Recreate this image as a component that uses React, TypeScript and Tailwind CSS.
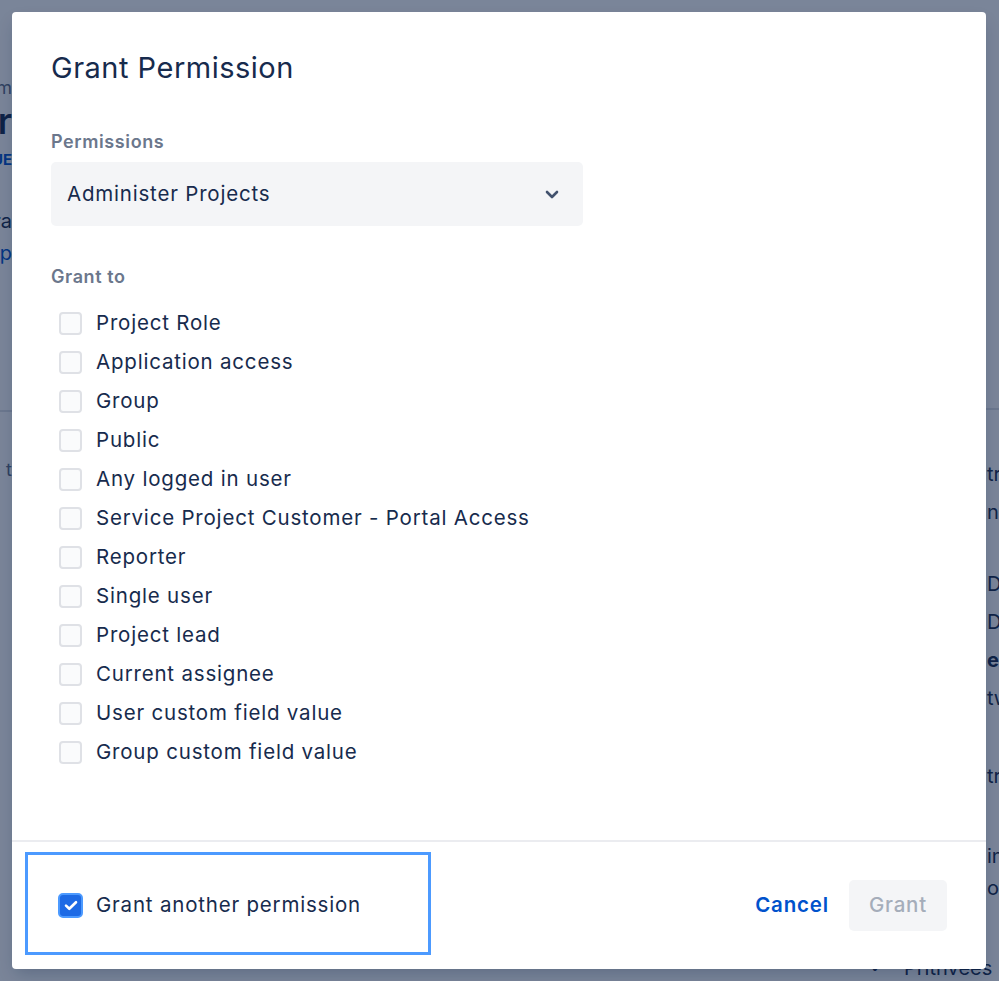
const grantOptions = [
  "Project Role",
  "Application access",
  "Group",
  "Public",
  "Any logged in user",
  "Service Project Customer - Portal Access",
  "Reporter",
  "Single user",
  "Project lead",
  "Current assignee",
  "User custom field value",
  "Group custom field value",
];

function Checkbox({ checked = false }: { checked?: boolean }) {
  if (checked) {
    return (
      <span className="flex h-[25px] w-[25px] items-center justify-center rounded-[5px] border-2 border-[#4c9aff] bg-[#1d6ae5]">
        <svg width="14" height="11" viewBox="0 0 14 11" fill="none">
          <path d="M2 5.6l3.3 3.2L12 2.2" stroke="white" strokeWidth="2.6" strokeLinecap="round" strokeLinejoin="round" />
        </svg>
      </span>
    );
  }
  return <span className="block h-[23px] w-[23px] rounded-[4px] border-2 border-[#dfe1e6] bg-[#fafbfc]" />;
}

function Backdrop() {
  return (
    <div className="flex min-h-[981px] w-[999px] justify-between bg-white text-[20px] leading-[28px] text-[#172b4d]">
      <div className="flex w-[12px] flex-col items-end pt-[77px] whitespace-nowrap">
        <div className="h-[22px] text-[18px] leading-[22px] text-[#5e6c84]">m</div>
        <div className="h-[44px] text-[36px] font-semibold leading-[44px]">r</div>
        <div className="mt-[7px] h-[20px] text-[15px] font-bold leading-[20px] text-[#0052cc]">UE</div>
        <div className="mt-[37px] h-[28px]">ra</div>
        <div className="mt-[4px] h-[28px] text-[#0052cc]">p</div>
        <div className="mt-[143px] h-[2px] w-[40px] self-start bg-[#dfe1e6]" />
        <div className="mt-[44px] h-[28px] text-[18px] text-[#5e6c84]">t</div>
      </div>
      <div className="flex w-[130px] flex-col pt-[408px] whitespace-nowrap">
        <div className="mb-[50px] h-[2px] bg-[#dfe1e6]" />
        <div className="ml-[118px] h-[38px]">tr</div>
        <div className="ml-[118px] h-[72px]">n-</div>
        <div className="ml-[118px] h-[38px]">D</div>
        <div className="ml-[118px] h-[38px]">D</div>
        <div className="ml-[118px] h-[38px] font-bold">e</div>
        <div className="ml-[118px] h-[78px]">tw</div>
        <div className="ml-[118px] h-[80px]">tr</div>
        <div className="ml-[118px] h-[32px]">in</div>
        <div className="ml-[118px] h-[80px]">o</div>
        <div className="flex h-[28px] items-center">
          <span className="w-[35px] pl-[2px] text-[14px]">•</span>
          <span>Prithvees</span>
        </div>
      </div>
    </div>
  );
}

export default function App() {
  return (
    <div className="relative h-[981px] w-[999px] overflow-hidden font-['Inter','Liberation_Sans',sans-serif]">
      <Backdrop />
      <div className="absolute inset-0 bg-[rgba(9,30,66,0.54)]" />
      <div className="absolute left-[12px] top-[12px] flex h-[957px] w-[974px] flex-col rounded-[4px] bg-white text-[#172b4d] shadow-[0_8px_16px_-4px_rgba(9,30,66,0.25)]">
        <div className="flex-1 px-[39px] pt-[38px]">
          <h1 className="h-[36px] text-[29px] leading-[36px] font-normal tracking-[0.5px]">Grant Permission</h1>
          <div className="mt-[46px] h-[20px] text-[18px] leading-[20px] font-semibold tracking-[0.6px] text-[#6b778c]">Permissions</div>
          <button className="mt-[10px] flex h-[64px] w-[532px] items-center justify-between rounded-[5px] bg-[#f4f5f7] pl-[16px] pr-[24px] text-left text-[20.5px] tracking-[0.8px]">
            <span>Administer Projects</span>
            <svg width="14" height="9" viewBox="0 0 14 9" fill="none">
              <path d="M2 2l5 5 5-5" stroke="#42526e" strokeWidth="2.6" strokeLinecap="round" strokeLinejoin="round" />
            </svg>
          </button>
          <div className="mt-[41px] h-[20px] text-[18px] leading-[20px] font-semibold tracking-[0.6px] text-[#6b778c]">Grant to</div>
          <ul className="mt-[17px]">
            {grantOptions.map((o) => (
              <li key={o} className="flex h-[39px] items-center text-[20.5px] tracking-[0.8px]">
                <span className="flex w-[45px] justify-end pr-[14px]">
                  <Checkbox />
                </span>
                <span>{o}</span>
              </li>
            ))}
          </ul>
        </div>
        <div className="h-[2px] bg-[#ebecf0]" />
        <div className="relative flex h-[127px] items-center justify-between px-[39px]">
          <div className="absolute left-[13px] top-[10px] h-[103px] w-[406px] border-[3px] border-[#4c9aff]" />
          <label className="flex items-center text-[20.5px] tracking-[0.8px]">
            <span className="flex w-[45px] justify-end pr-[13px]">
              <Checkbox checked />
            </span>
            <span>Grant another permission</span>
          </label>
          <div className="flex items-center text-[20.5px] tracking-[0.8px]">
            <button className="h-[51px] px-[20px] font-semibold text-[#0052cc]">Cancel</button>
            <button className="h-[51px] rounded-[5px] bg-[#f4f5f7] px-[20px] font-medium text-[#a5adba]">Grant</button>
          </div>
        </div>
      </div>
    </div>
  );
}
